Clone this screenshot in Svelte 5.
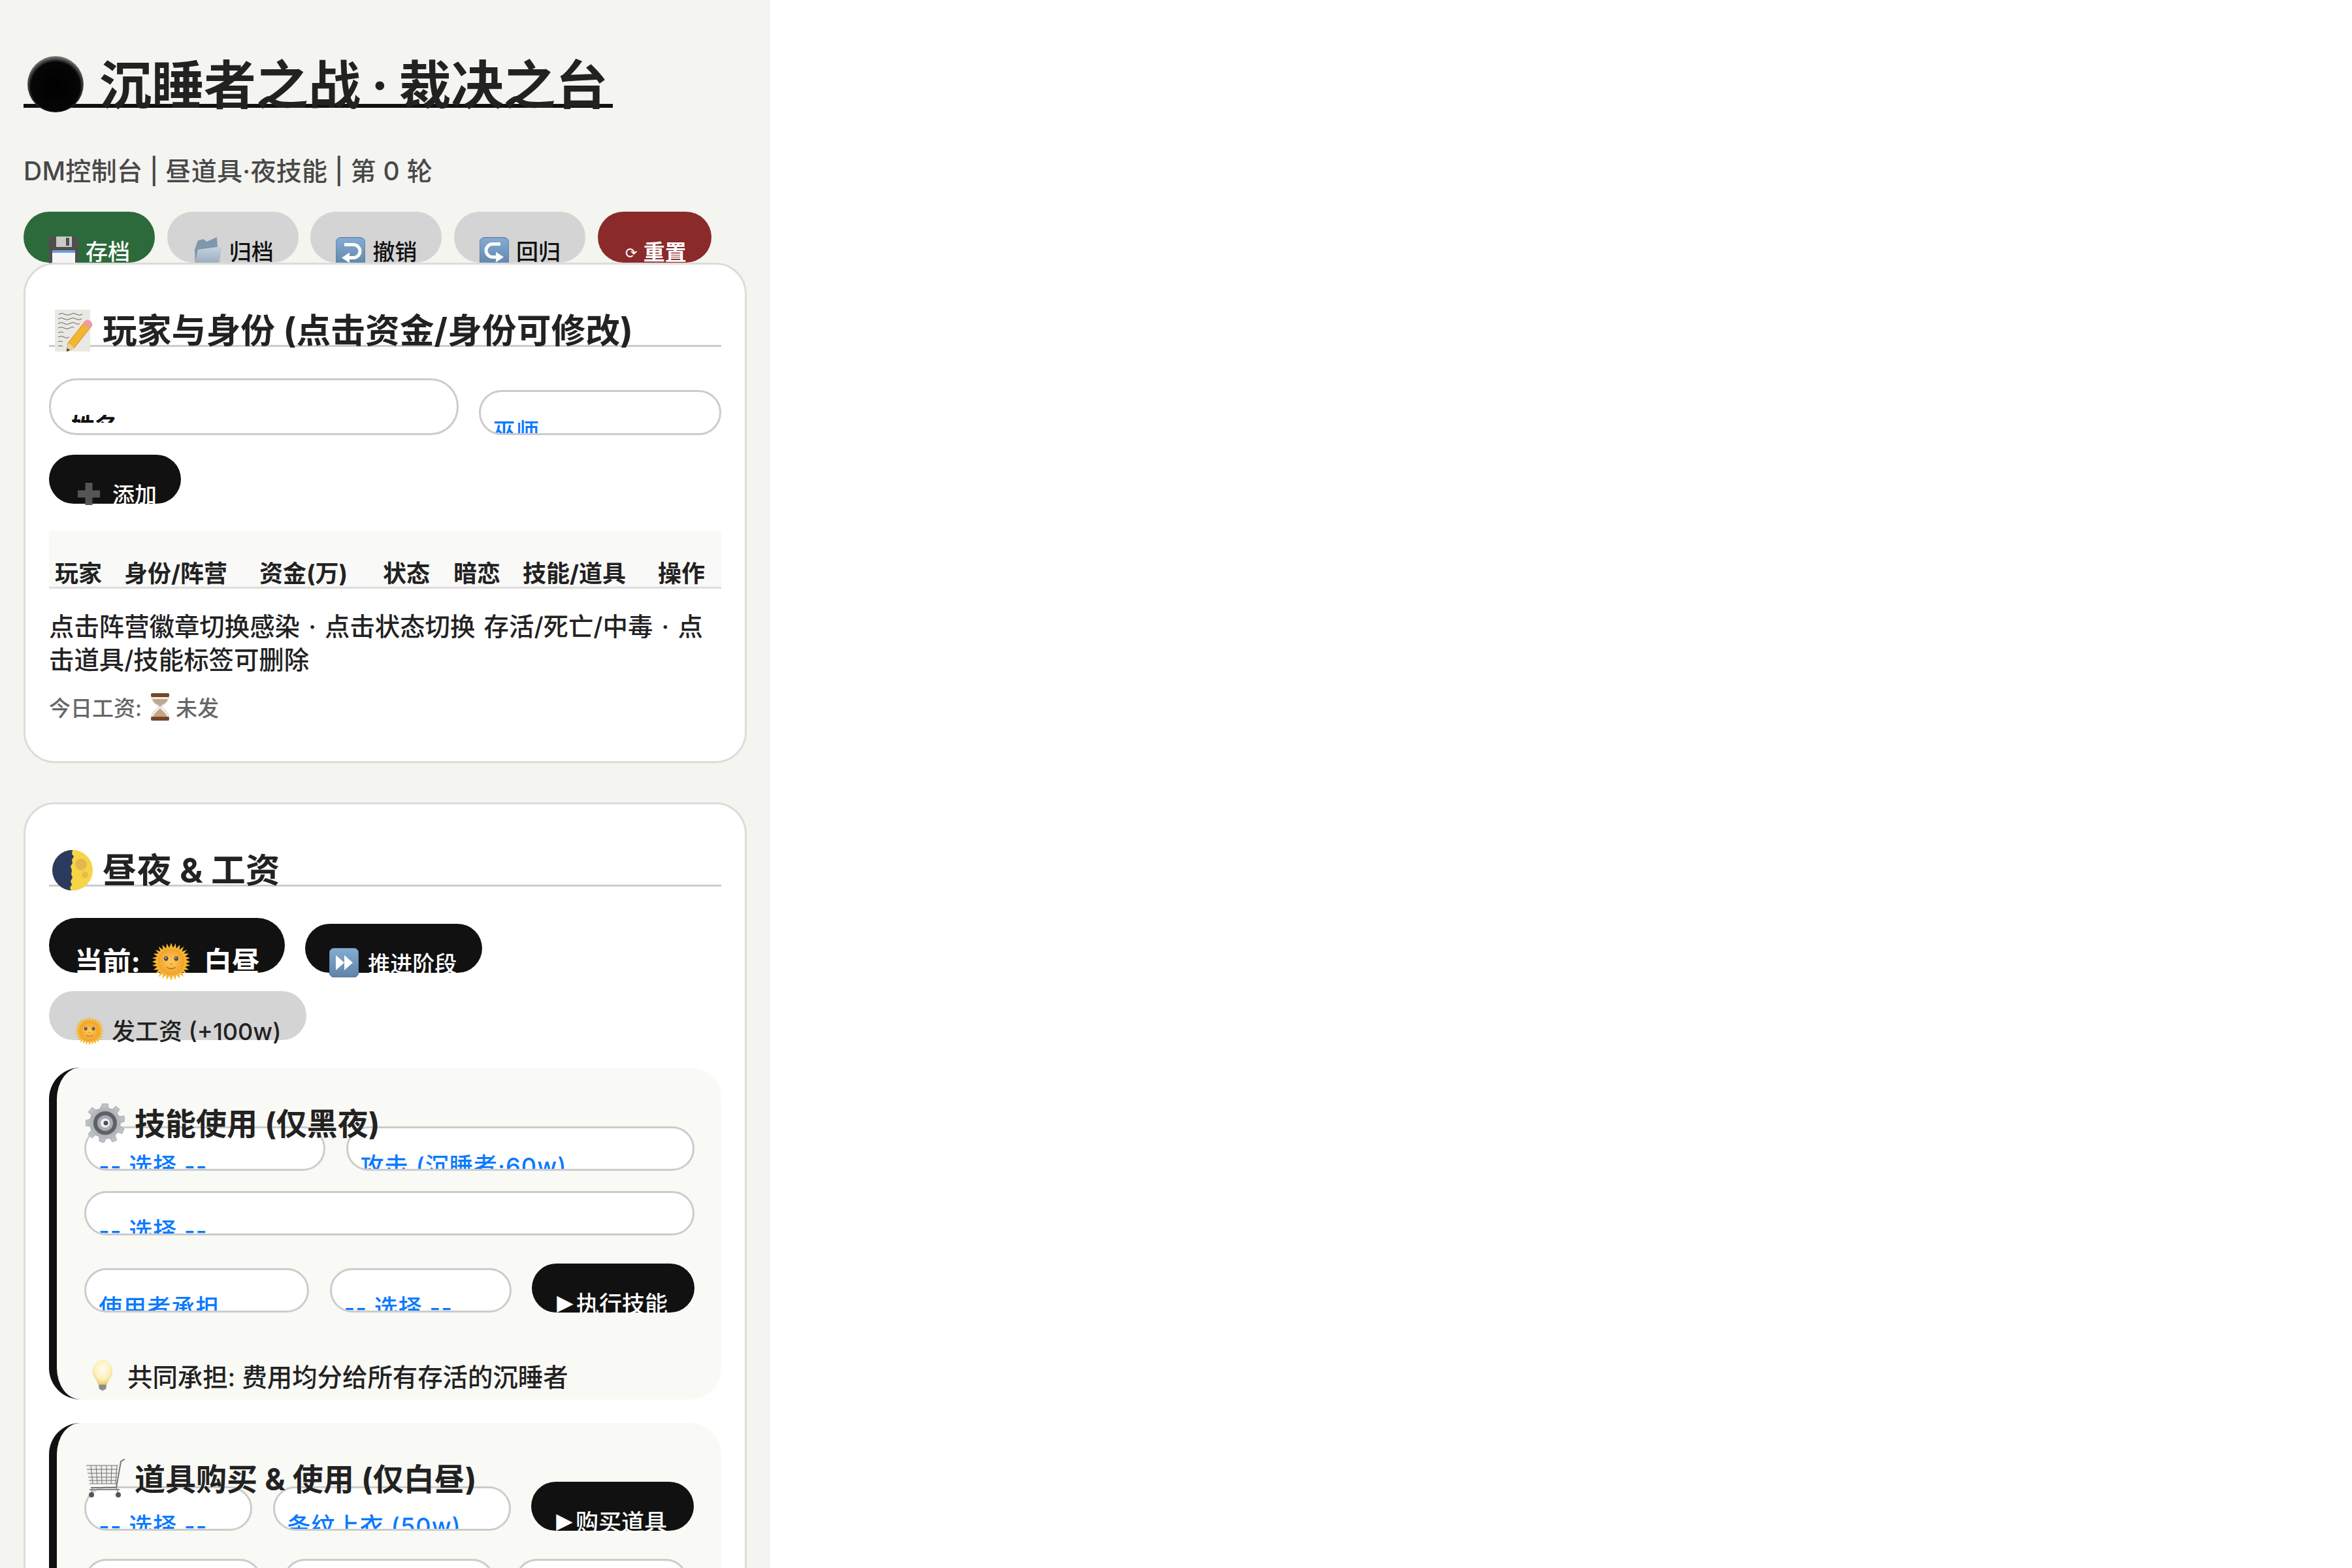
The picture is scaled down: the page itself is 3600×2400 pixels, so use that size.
<script>
  const toolbar = [
    { label: '存档', icon: 'floppy', tone: 'green' },
    { label: '归档', icon: 'folder', tone: 'grey' },
    { label: '撤销', icon: 'undo', tone: 'grey' },
    { label: '回归', icon: 'redo', tone: 'grey' }
  ];
  const columns = ['玩家', '身份/阵营', '资金(万)', '状态', '暗恋', '技能/道具', '操作'];
</script>

{#snippet icon(name, cls)}
  {#if name === 'ball'}
    <svg class={cls} viewBox="0 0 64 64">
      <defs>
        <radialGradient id="ballG" cx="50%" cy="54%" r="52%">
          <stop offset="0" stop-color="#000" /><stop offset=".84" stop-color="#060606" /><stop offset="1" stop-color="#6f6f6f" />
        </radialGradient>
      </defs>
      <circle cx="32" cy="32" r="32" fill="url(#ballG)" />
    </svg>
  {:else if name === 'floppy'}
    <svg class={cls} viewBox="0 0 45 48">
      <path d="M0 0H41L45 4V48H0Z" fill="#4f4f4f" />
      <rect x="11" y="0" width="24" height="16" fill="#c9c9c9" />
      <rect x="26" y="2" width="5" height="12" fill="#4f4f4f" />
      <rect x="5" y="21" width="35" height="27" fill="#f6f6f6" />
      <rect x="5" y="21" width="35" height="4" fill="#6fa0d8" />
    </svg>
  {:else if name === 'folder'}
    <svg class={cls} viewBox="0 0 45 48">
      <defs>
        <linearGradient id="folderG" x1="0" y1="0" x2="0" y2="1">
          <stop offset="0" stop-color="#c6d3de" /><stop offset="1" stop-color="#8ea4b8" />
        </linearGradient>
      </defs>
      <path d="M8 6 L17 4 L21 8 L37 1 L38 16 L4 48 L3 20Z" fill="#7f97ad" />
      <path d="M8 20 L45 15 L39 48 L2 48Z" fill="url(#folderG)" />
    </svg>
  {:else if name === 'undo' || name === 'redo' || name === 'ff'}
    <svg class={cls} viewBox="0 0 45 45">
      <defs>
        <linearGradient id="keyG" x1="0" y1="0" x2="0" y2="1">
          <stop offset="0" stop-color="#84acd3" /><stop offset="1" stop-color="#5f83a8" />
        </linearGradient>
      </defs>
      <rect x="0" y="0" width="45" height="45" rx="8" fill="url(#keyG)" stroke="#4f7398" stroke-width="1" />
      {#if name === 'undo'}
        <path d="M13 11 H27 A10 10 0 0 1 27 31 H19" fill="none" stroke="#fff" stroke-width="5" />
        <path d="M21 23 L9 31 L21 39Z" fill="#fff" />
      {:else if name === 'redo'}
        <path d="M32 10 H20 A10 10 0 0 0 20 30 H26" fill="none" stroke="#fff" stroke-width="5" />
        <path d="M25 22 L37 30 L25 38Z" fill="#fff" />
      {:else}
        <path d="M10 11 L23 22.5 L10 34Z M23 11 L36 22.5 L23 34Z" fill="#fff" />
      {/if}
    </svg>
  {:else if name === 'memo'}
    <svg class={cls} viewBox="0 0 58 64">
      <rect x="0" y="0" width="54" height="64" fill="#e9e8e3" />
      <path d="M6 7q5-3 9 0t9 0 9 0 9 0 M5 14q5-3 9 0t9 0 9 0 9 0 M5 21q5-3 9 0t9 0 9 0 6 0 M5 28q5-3 9 0t9 0 6 0 M5 35q4-2 8 0 M5 42q5-3 9 0t8 0 M5 49q4-2 7 0 M5 56q4-2 7 0" fill="none" stroke="#555" stroke-width=".9" />
      <path d="M47 17 L57 24 L30 58 L18 64 L20 51Z" fill="#f2b630" stroke="#c98c1c" stroke-width="1" />
      <path d="M47 17 Q50 14 54 17 Q58 20 57 24 L53 29 L43 22Z" fill="#ee9aa3" />
      <path d="M18 64 L20 51 L30 58Z" fill="#e8cfa0" />
      <path d="M18 64 L19 59 L23 62Z" fill="#333" />
    </svg>
  {:else if name === 'plus'}
    <svg class={cls} viewBox="0 0 34 34">
      <path d="M11.500 0H22.500V11.500H34V22.500H22.500V34H11.500V22.500H0V11.500H11.500Z" fill="#555" />
    </svg>
  {:else if name === 'hourglass'}
    <svg class={cls} viewBox="0 0 32 42">
      <path d="M3 4 C3 17 13 17 13 21 C13 25 3 25 3 38 H29 C29 25 19 25 19 21 C19 17 29 17 29 4Z" fill="#f0eeea" stroke="#bdb8ae" stroke-width=".6" />
      <path d="M4.500 9 H27.500 C26 17 17 17 16.500 21 H15.500 C15 17 6 17 4.500 9Z" fill="#bda88d" />
      <path d="M5 37 C6 31 12 28 16 23 C20 28 26 31 27 37Z" fill="#c7a67f" />
      <rect x="2" y="0" width="28" height="6" rx="2" fill="#74462a" />
      <rect x="2" y="36" width="28" height="6" rx="2" fill="#74462a" />
    </svg>
  {:else if name === 'moon'}
    <svg class={cls} viewBox="0 0 62 62">
      <defs>
        <clipPath id="moonC"><circle cx="31" cy="31" r="31" /></clipPath>
      </defs>
      <g clip-path="url(#moonC)">
        <rect width="62" height="62" fill="#f7d445" />
        <circle cx="44" cy="22" r="9" fill="#d9ad56" opacity=".7" />
        <circle cx="50" cy="38" r="5" fill="#d9ad56" opacity=".6" />
        <path d="M0 0H31L30 6L33 10L30 15L31 20L28 25L30 31L29 37L31 42L28 48L30 53L27 58L29 62H0Z" fill="#2a3b5f" />
      </g>
    </svg>
  {:else if name === 'sun'}
    <svg class={cls} viewBox="0 0 60 60">
      <defs>
        <radialGradient id="sunG" cx="50%" cy="50%" r="50%">
          <stop offset="0" stop-color="#fdc95a" /><stop offset="1" stop-color="#f2a229" />
        </radialGradient>
      </defs>
      <path d="M30 0L33 8L37 1L38 9L44 3L43 11L50 6L47 14L55 11L50 17L58 17L52 22L60 24L53 27L60 30L53 33L60 36L52 38L58 43L50 43L55 49L47 46L50 54L43 49L44 57L38 51L37 59L33 52L30 60L27 52L23 59L22 51L16 57L17 49L10 54L13 46L5 49L10 43L2 43L8 38L0 36L7 33L0 30L7 27L0 24L8 22L2 17L10 17L5 11L13 14L10 6L17 11L16 3L22 9L23 1L27 8Z" fill="#f5b631" />
      <circle cx="30" cy="30" r="21" fill="url(#sunG)" />
      <ellipse cx="22" cy="25" rx="3.200" ry="3.600" fill="#4c4452" />
      <ellipse cx="38" cy="25" rx="3.200" ry="3.600" fill="#4c4452" />
      <circle cx="21.500" cy="24" r="1" fill="#fff" /><circle cx="37.500" cy="24" r="1" fill="#fff" />
      <path d="M28 33q2 2 4 0" fill="none" stroke="#d88a2a" stroke-width="1.400" />
      <path d="M23 39q7 4.500 14 0" fill="none" stroke="#b96f22" stroke-width="1.600" />
    </svg>
  {:else if name === 'gear'}
    <svg class={cls} viewBox="0 0 60 60">
      <defs>
        <radialGradient id="gearG" cx="50%" cy="50%" r="50%">
          <stop offset="0" stop-color="#8d9097" /><stop offset="1" stop-color="#c3c6cb" />
        </radialGradient>
      </defs>
      <path d="M26 0H34L35 7L41 9L46 4L52 9L48 15L52 20L59 19L60 27L53 30L53 35L59 39L56 46L49 44L45 49L48 56L41 59L37 53L31 54L28 60L21 58L21 51L15 48L10 53L4 47L9 41L7 35L0 34L0 26L7 24L9 18L4 13L10 6L16 10L22 8Z" fill="url(#gearG)" stroke="#85888e" stroke-width=".6" />
      <circle cx="30" cy="30" r="18" fill="#5e6168" />
      <circle cx="30" cy="30" r="12" fill="#a9acb2" />
      <circle cx="30" cy="30" r="7" fill="#eef0f2" />
      <circle cx="31" cy="30" r="3.500" fill="#4b4e55" />
    </svg>
  {:else if name === 'bulb'}
    <svg class={cls} viewBox="0 0 30 48">
      <defs>
        <radialGradient id="bulbG" cx="50%" cy="38%" r="60%">
          <stop offset="0" stop-color="#fffdf0" /><stop offset=".7" stop-color="#fdf0b8" /><stop offset="1" stop-color="#eccf72" />
        </radialGradient>
      </defs>
      <path d="M15 0C24 0 30 9 30 18C30 27 23 31 22 38H8C7 31 0 27 0 18C0 9 6 0 15 0Z" fill="url(#bulbG)" />
      <path d="M9 38H21L20 45L15 48L10 45Z" fill="#9c9c96" />
      <path d="M9 41H21M9.500 44H20.500" stroke="#6e6e68" stroke-width="1" />
    </svg>
  {:else if name === 'cart'}
    <svg class={cls} viewBox="0 0 60 60">
      <path d="M1 10 H50 L47 38 H6Z" fill="#f0f0ec" />
      <path d="M1 10H50M2 16H49M3 22H49M4 28H48M5 33H47M6 38H47M8 10L11 38M16 10L18 38M24 10L25 38M32 10L32 38M40 10L39 38M48 10L46 38" stroke="#6f6f6b" stroke-width="1" fill="none" />
      <path d="M60 0 L54 4 L47 44 H8" fill="none" stroke="#777" stroke-width="2" />
      <path d="M6 47 H52" stroke="#888" stroke-width="1.800" />
      <path d="M11 44L9 52M47 44L50 52" stroke="#888" stroke-width="1.500" />
      <circle cx="9" cy="55" r="4" fill="#555" /><circle cx="50" cy="55" r="4" fill="#555" />
    </svg>
  {/if}
{/snippet}

<div class="page">
  <h1 class="title">{@render icon('ball', 'title-icon')}<span>沉睡者之战 · 裁决之台</span></h1>
  <p class="subtitle">DM控制台 | 昼道具·夜技能 | 第 0 轮</p>

  <div class="toolbar">
    {#each toolbar as b}
      <button class="btn {b.tone}">{@render icon(b.icon, 'btn-icon')}{b.label}</button>
    {/each}
    <button class="btn red"><span class="reload">⟳</span><b>重置</b></button>
  </div>

  <section class="card">
    <h2>{@render icon('memo', 'h2-memo')}<span>玩家与身份 (点击资金/身份可修改)</span></h2>
    <div class="add-row">
      <div class="field name"><span class="clip">姓名</span></div>
      <div class="field role"><span>巫师</span></div>
    </div>
    <button class="btn black add">{@render icon('plus', 'plus-icon')}添加</button>
    <table>
      <thead>
        <tr>
          {#each columns as c}<th>{c}</th>{/each}
        </tr>
      </thead>
    </table>
    <p class="hint">点击阵营徽章切换感染 · 点击状态切换 存活/死亡/中毒 · 点<br />击道具/技能标签可删除</p>
    <p class="wage">今日工资: {@render icon('hourglass', 'wage-icon')}未发</p>
  </section>

  <section class="card second">
    <h2>{@render icon('moon', 'h2-moon')}<span>昼夜 &amp; 工资</span></h2>
    <div class="phase-row">
      <button class="btn black phase">当前: {@render icon('sun', 'phase-sun')}白昼</button>
      <button class="btn black next">{@render icon('ff', 'btn-icon')}推进阶段</button>
    </div>
    <button class="btn grey pay">{@render icon('sun', 'pay-sun')}发工资 (+100w)</button>

    <div class="panel first">
      <h3>{@render icon('gear', 'h3-icon')}<span>技能使用 (仅黑夜)</span></h3>
      <div class="row">
        <div class="field w369"><span>-- 选择 --</span></div>
        <div class="field w533"><span>攻击 (沉睡者·60w)</span></div>
      </div>
      <div class="row">
        <div class="field wfull"><span>-- 选择 --</span></div>
      </div>
      <div class="row tall">
        <div class="field w344"><span>使用者承担</span></div>
        <div class="field w278"><span>-- 选择 --</span></div>
        <button class="btn black go"><span class="tri">▶</span>执行技能</button>
      </div>
      <p class="note">{@render icon('bulb', 'note-icon')}共同承担: 费用均分给所有存活的沉睡者</p>
    </div>

    <div class="panel">
      <h3>{@render icon('cart', 'h3-icon')}<span>道具购买 &amp; 使用 (仅白昼)</span></h3>
      <div class="row tall first-row">
        <div class="field w257"><span>-- 选择 --</span></div>
        <div class="field w364"><span>条纹上衣 (50w)</span></div>
        <button class="btn black go"><span class="tri">▶</span>购买道具</button>
      </div>
      <div class="row tall">
        <div class="field w272"></div>
        <div class="field w324"></div>
        <div class="field w265"></div>
      </div>
    </div>
  </section>
</div>

<style>
  :global(body) {
    margin: 0;
    background: #fff;
  }
  .page {
    box-sizing: border-box;
    width: 1179px;
    height: 2400px;
    overflow: hidden;
    padding: 99px 36px 0;
    background: #f4f4f0;
    color: #222;
    font-family: Inter, "Noto Sans CJK SC", sans-serif;
  }
  .title {
    display: flex;
    align-items: center;
    width: 902px;
    height: 60px;
    margin: 0;
    border-bottom: 6px solid #111;
    font-size: 80px;
    font-weight: 700;
    line-height: 60px;
    white-space: nowrap;
    word-spacing: -3px;
  }
  .title span {
    margin-top: 1px;
  }
  .title-icon {
    flex: none;
    width: 86px;
    height: 86px;
    margin: 0 24px 0 6px;
  }
  .subtitle {
    margin: 74px 0 40px;
    color: #484848;
    font-size: 39px;
    font-weight: 500;
    letter-spacing: .3px;
    line-height: 45px;
  }
  .toolbar {
    display: flex;
    gap: 18.700px;
  }
  .btn {
    box-sizing: border-box;
    display: flex;
    align-items: flex-start;
    height: 75px;
    padding: 44px 39px 0;
    border: 0;
    border-radius: 999px;
    font-family: inherit;
    font-size: 34px;
    font-weight: 500;
    line-height: 36px;
    white-space: nowrap;
  }
  .toolbar .btn {
    height: 78px;
    padding-right: 38px;
  }
  .green { background: #2d6a3b; color: #fff; }
  .grey { background: #d4d4d4; color: #111; }
  .toolbar .red { padding-left: 33px; background: #8b2a2a; color: #fff; }
  .black { background: #111; color: #fff; }
  .btn-icon {
    flex: none;
    width: 45px;
    height: 48px;
    margin: -6px 11px 0 0;
  }
  .reload {
    width: 37px;
    margin-top: 2px;
    font-family: "DejaVu Sans", sans-serif;
    font-size: 22px;
  }
  .red b {
    font-size: 33px;
    font-weight: 700;
  }
  .card {
    position: relative;
    box-sizing: border-box;
    height: 766px;
    padding: 79px 36px 0;
    border: 3px solid #dcdcda;
    border-radius: 48px;
    background: #fff;
  }
  .second {
    height: 1300px;
    margin-top: 60px;
  }
  h2 {
    display: flex;
    align-items: center;
    height: 44px;
    margin: 0;
    border-bottom: 3px solid #ccc;
    font-size: 52.800px;
    font-weight: 700;
    white-space: nowrap;
  }
  h2 span {
    margin-bottom: 8px;
  }
  .h2-memo {
    flex: none;
    width: 58px;
    height: 64px;
    margin: 0 15px 0 9px;
  }
  .h2-moon {
    flex: none;
    width: 62px;
    height: 62px;
    margin: 0 15px 0 5px;
  }
  .add-row {
    display: flex;
    align-items: flex-end;
    gap: 31px;
    margin-top: 48px;
  }
  .field {
    box-sizing: border-box;
    flex: none;
    height: 68px;
    padding: 40px 0 0 19px;
    overflow: hidden;
    border: 3px solid #ccc;
    border-radius: 36px;
    background: #fff;
    color: #0a7aff;
    font-size: 36px;
    font-weight: 500;
    letter-spacing: 1.100px;
    line-height: 36px;
    white-space: nowrap;
  }
  .field.name {
    width: 627px;
    height: 87px;
    padding: 53px 0 0 31px;
    border-radius: 43px;
    color: #111;
    letter-spacing: 0;
  }
  .clip {
    display: block;
    height: 12px;
    overflow: hidden;
    font-weight: 700;
  }
  .field.role {
    width: 371px;
    height: 69px;
    padding-top: 42px;
    padding-left: 18px;
    font-size: 35px;
  }
  .add {
    margin-top: 30px;
    width: 202px;
    padding-left: 44px;
  }
  .plus-icon {
    flex: none;
    width: 34px;
    height: 34px;
    margin: -1px 19px 0 0;
  }
  table {
    width: 1029px;
    margin-top: 42px;
    border-collapse: collapse;
    table-layout: fixed;
  }
  thead tr {
    border-bottom: 3px solid #ddd;
  }
  th {
    box-sizing: border-box;
    padding: 47px 0 2px 9px;
    background: #f9f9f7;
    font-size: 36px;
    font-weight: 700;
    line-height: 36px;
    text-align: left;
    white-space: nowrap;
  }
  th:nth-child(1) { width: 106px; }
  th:nth-child(4) { width: 108px; }
  th:nth-child(2), th:nth-child(6) { width: 207px; }
  th:nth-child(3) { width: 189px; }
  th:nth-child(5) { width: 106px; }
  th:nth-child(7) { width: 106px; }
  .hint {
    margin: 33px 0 0;
    font-size: 38.400px;
    font-weight: 500;
    line-height: 51px;
    word-spacing: 3px;
  }
  .wage {
    display: flex;
    align-items: center;
    height: 42px;
    margin: 25px 0 0;
    color: #666;
    font-size: 33px;
    font-weight: 500;
  }
  .wage-icon {
    flex: none;
    width: 32px;
    height: 42px;
    margin: 0 8px 0 12px;
  }
  .phase-row {
    display: flex;
    align-items: flex-end;
    gap: 31px;
    margin-top: 48px;
  }
  .phase {
    height: 84px;
    padding: 46px 38px 0 39px;
    font-size: 43.200px;
    font-weight: 700;
    line-height: 42px;
  }
  .phase-sun {
    flex: none;
    width: 58px;
    height: 58px;
    margin: -8px 21px 0 18px;
  }
  .next {
    font-size: 34px;
    padding-left: 37px;
    padding-right: 39px;
  }
  .next .btn-icon {
    height: 45px;
    margin-top: -7px;
    margin-right: 14px;
  }
  .pay {
    margin-top: 28px;
    color: #222;
    font-size: 36px;
    padding-left: 40px;
  }
  .pay-sun {
    flex: none;
    width: 44px;
    height: 44px;
    margin: -5px 12px 0 0;
  }
  .panel {
    box-sizing: border-box;
    margin-top: 36px;
    padding: 64px 41px 13px 42px;
    border-left: 12px solid #111;
    border-radius: 48px;
    background: #f9f9f5;
  }
  .panel.first {
    margin-top: 42px;
  }
  h3 {
    position: relative;
    z-index: 1;
    display: flex;
    align-items: center;
    height: 46px;
    margin: 0 0 -20px;
    font-size: 47px;
    font-weight: 700;
    white-space: nowrap;
  }
  h3 span {
    margin-bottom: 10px;
  }
  .h3-icon {
    flex: none;
    width: 60px;
    height: 60px;
    margin: -4px 15px 0 2px;
  }
  .row {
    display: flex;
    align-items: flex-end;
    gap: 31.500px;
    margin-top: 31px;
  }
  .row:nth-of-type(1) {
    margin-top: 0;
  }
  .row.tall {
    margin-top: 43px;
  }
  .row.first-row {
    margin-top: 0;
  }
  .w369 { width: 369px; }
  .w533 { width: 533px; }
  .wfull { width: 934px; }
  .w344 { width: 344px; }
  .w278 { width: 278px; }
  .w257 { width: 257px; }
  .w364 { width: 364px; }
  .w272 { width: 272px; }
  .w324 { width: 324px; }
  .w265 { width: 265px; }
  .go {
    width: 249px;
    padding-left: 34px;
    padding-right: 0;
    font-size: 35px;
  }
  .tri {
    width: 34px;
    margin-top: -2px;
    font-family: "DejaVu Sans", sans-serif;
    font-size: 33px;
  }
  .note {
    display: flex;
    align-items: center;
    height: 48px;
    margin: 72px 0 0;
    font-size: 38.400px;
    font-weight: 500;
  }
  .note-icon {
    flex: none;
    width: 30px;
    height: 48px;
    margin: 0 23px 0 13px;
  }
</style>
